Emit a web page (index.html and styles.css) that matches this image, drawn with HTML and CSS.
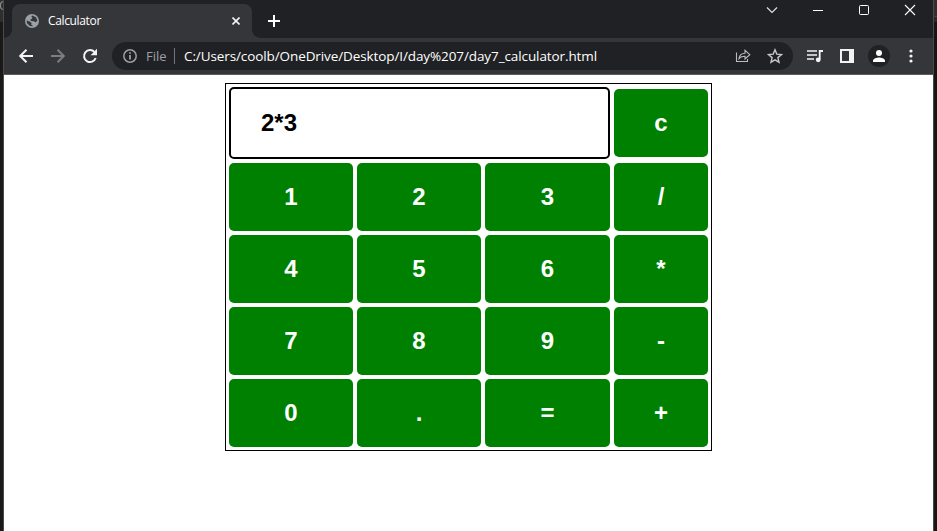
FILE: index.html
```
<!DOCTYPE html>
<html lang="en">
<head>
<meta charset="utf-8">
<title>Calculator</title>
<link rel="stylesheet" href="styles.css">
</head>
<body>
<div class="edge left"><svg class="behind" viewBox="0 0 3 12"><path d="M3 1.500C-.5 2-.5 9 3 9.500" fill="none" stroke="#888" stroke-width="1.200"/></svg></div>
<div class="window">
  <header class="tabstrip">
    <div class="tab">
      <svg class="globe" viewBox="0 0 14 14"><circle cx="7" cy="7" r="7" fill="#9aa0a6"/><path d="M7.3 1.5 11 3.200 12.400 6.800 10.500 8.200 8.800 7.200 6 7 5.300 5.600 7 4.700 7.300 3.500 6.300 2.700zM1.500 6.600 4.700 7.600 6.600 9 6.200 10.400 8.200 12.300 5 12 2.200 9.600z" fill="#35363a"/></svg>
      <span class="title">Calculator</span>
      <svg class="close" viewBox="0 0 8 8"><path d="M.5.5l7 7m0-7l-7 7" stroke="#f1f3f4" stroke-width="1.6"/></svg>
    </div>
    <svg class="newtab" viewBox="0 0 12 12"><path d="M6 0v12M0 6h12" stroke="#fff" stroke-width="2"/></svg>
    <div class="controls">
      <svg viewBox="0 0 12 12"><path d="M1 3.500l5 5 5-5" fill="none" stroke="#e4e5e6" stroke-width="1.100"/></svg>
      <svg viewBox="0 0 12 12"><path d="M1 6.500h10" stroke="#fff"/></svg>
      <svg viewBox="0 0 12 12"><rect x="1.500" y="1.500" width="9" height="9" rx="1" fill="none" stroke="#fff"/></svg>
      <svg viewBox="0 0 12 12"><path d="M1 1l10 10m0-10L1 11" stroke="#fff" stroke-width="1.100"/></svg>
    </div>
  </header>
  <nav class="toolbar">
    <svg class="nav" viewBox="0 0 16 16"><path d="M15 8H2.500M8.500 1.700L2.200 8l6.300 6.300" fill="none" stroke="#f1f3f4" stroke-width="2"/></svg>
    <svg class="nav" viewBox="0 0 16 16"><path d="M1 8h12.500M7.500 1.700L13.800 8l-6.300 6.300" fill="none" stroke="#7c7e82" stroke-width="2"/></svg>
    <svg class="nav" viewBox="0 0 16 16"><path d="M13.700 10A6 6 0 1 1 12.500 4" fill="none" stroke="#f1f3f4" stroke-width="2"/><path d="M15 .8v6.400H8.600z" fill="#f1f3f4"/></svg>
    <div class="omnibox">
      <svg class="info" viewBox="0 0 14 14"><circle cx="7" cy="7" r="6.200" fill="none" stroke="#9aa0a6" stroke-width="1.500"/><path d="M7 6v4.500M7 3.300v1.500" stroke="#b4b8bd" stroke-width="1.500"/></svg>
      <span class="scheme">File</span>
      <span class="divider"></span>
      <span class="url">C:/Users/coolb/OneDrive/Desktop/I/day%207/day7_calculator.html</span>
      <svg class="share" viewBox="0 0 16 16"><path d="M1.500 4.500v9h11V11M4 10.500C4.500 7 6.500 5.300 10 5.200V2.300l4.800 4.400L10 11V8.300C7.300 8.200 5.500 8.900 4 10.500z" fill="none" stroke="#b9bbbe" stroke-width="1.100"/></svg>
      <svg class="star" viewBox="0 0 16 16"><path d="M8 1.800l1.800 4.300 4.700.4-3.600 3.100 1.100 4.600L8 11.800l-4 2.400 1.100-4.600L1.500 6.500l4.700-.4z" fill="none" stroke="#c4c6c9" stroke-width="1.400"/></svg>
    </div>
    <svg class="media" viewBox="0 0 16 14"><path d="M0 2h10M0 6h10M0 10h7" stroke="#f1f3f4" stroke-width="1.700"/><path d="M16 2h-3.300v8.500" fill="none" stroke="#f1f3f4" stroke-width="1.800"/><circle cx="11.200" cy="10.800" r="2.400" fill="#f1f3f4"/></svg>
    <svg class="panel" viewBox="0 0 14 14"><path d="M0 0h14v14H0zM2 2v10h7V2z" fill="#f1f3f4" fill-rule="evenodd"/></svg>
    <svg class="avatar" viewBox="0 0 22 22"><circle cx="11" cy="11" r="11" fill="#202124"/><circle cx="11" cy="8" r="3" fill="#fff"/><path d="M5 17v-1.500c0-2 4-3.100 6-3.100s6 1.100 6 3.100V17z" fill="#fff"/></svg>
    <svg class="more" viewBox="0 0 4 14"><g fill="#f1f3f4"><circle cx="2" cy="2" r="1.600"/><circle cx="2" cy="7" r="1.600"/><circle cx="2" cy="12" r="1.600"/></g></svg>
  </nav>
  <main class="page">
    <div class="calculator">
      <div class="display">2*3</div>
      <button class="clear">c</button>
      <button>1</button><button>2</button><button>3</button><button>/</button>
      <button>4</button><button>5</button><button>6</button><button>*</button>
      <button>7</button><button>8</button><button>9</button><button>-</button>
      <button>0</button><button>.</button><button>=</button><button>+</button>
    </div>
  </main>
</div>
<div class="edge right"></div>
</body>
</html>
```
FILE: styles.css
```
* { box-sizing: border-box; }
body {
  margin: 0;
  width: 937px;
  height: 531px;
  display: flex;
  overflow: hidden;
  background: #1a1918;
  font-family: "Open Sans", sans-serif;
}
svg { display: block; flex: none; }
.edge { width: 4px; flex: none; overflow: hidden; }
.left {
  border-right: 1px solid #4b4b4d;
  background: linear-gradient(#2f2e2e 22px, #1a1918 22px);
}
.right {
  border-left: 1px solid #48494b;
  background: linear-gradient(#302f2f 16px, #444 16px 17px, #292827 17px 22px, #171615 22px);
}
.behind { width: 3px; height: 12px; }
.window { width: 929px; display: flex; flex-direction: column; }
.tabstrip {
  height: 38px;
  flex: none;
  display: flex;
  background: #202124;
  padding: 4px 17px 0 8px;
}
.tab {
  width: 240px;
  height: 34px;
  display: flex;
  align-items: center;
  padding: 0 12px 0 13px;
  background: #35363a;
  border-radius: 8px 8px 0 0;
  position: relative;
}
.tab::before, .tab::after {
  content: "";
  position: absolute;
  bottom: 0;
  width: 8px;
  height: 8px;
}
.tab::before { left: -8px; background: radial-gradient(circle at 0 0, transparent 7.5px, #35363a 8px); }
.tab::after { right: -8px; background: radial-gradient(circle at 100% 0, transparent 7.5px, #35363a 8px); }
.globe { width: 14px; height: 14px; }
.title { margin-left: 9px; font-size: 12px; letter-spacing: -.35px; line-height: 16px; color: #fff; flex: 1; }
.close { width: 8px; height: 8px; }
.newtab { width: 12px; height: 12px; margin: 11px 0 0 16px; }
.controls { display: flex; gap: 34px; margin-left: auto; }
.controls svg { width: 12px; height: 12px; }
.toolbar {
  height: 37px;
  flex: none;
  display: flex;
  align-items: center;
  background: #35363a;
  border-bottom: 1px solid #5b5c60;
  padding-left: 14px;
}
.nav { width: 16px; height: 16px; margin-right: 16px; }
.omnibox {
  width: 681px;
  height: 28px;
  margin-left: -2px;
  display: flex;
  align-items: center;
  border-radius: 14px;
  background: #202124;
  padding: 0 10px 0 11px;
  font-size: 13.5px;
  line-height: 18px;
}
.info { width: 14px; height: 14px; }
.scheme { width: 28px; margin-left: 9px; color: #9aa0a6; font-size: 13px; }
.divider { width: 1px; height: 16px; background: #73757a; }
.url { margin-left: 9px; color: #fff; white-space: nowrap; letter-spacing: -.1px; }
.share { width: 16px; height: 16px; margin-left: auto; }
.star { width: 16px; height: 16px; margin-left: 16px; }
.media { width: 16px; height: 14px; margin-left: 14px; }
.panel { width: 14px; height: 14px; margin-left: 17px; }
.avatar { width: 22px; height: 22px; margin-left: 14px; }
.more { width: 4px; height: 14px; margin-left: 19px; }
.page { flex: 1; background: #fff; padding-top: 8px; }
.calculator {
  width: 487px;
  height: 368px;
  margin-left: 221px;
  border: 1px solid #000;
  padding: 3px;
  display: grid;
  grid-template-columns: 124px 124px 125px 94px;
  grid-template-rows: 72px repeat(4, 68px);
  gap: 4px;
  font: bold 24px "Liberation Sans", Arial, sans-serif;
}
.display {
  grid-column: span 3;
  border: 2px solid #000;
  border-radius: 5px;
  padding-left: 30px;
  line-height: 68px;
}
.calculator button {
  font: inherit;
  color: #fff;
  background: green;
  border: 0;
  border-radius: 5px;
  padding: 0;
}
.calculator .clear { height: 68px; align-self: center; }
```
